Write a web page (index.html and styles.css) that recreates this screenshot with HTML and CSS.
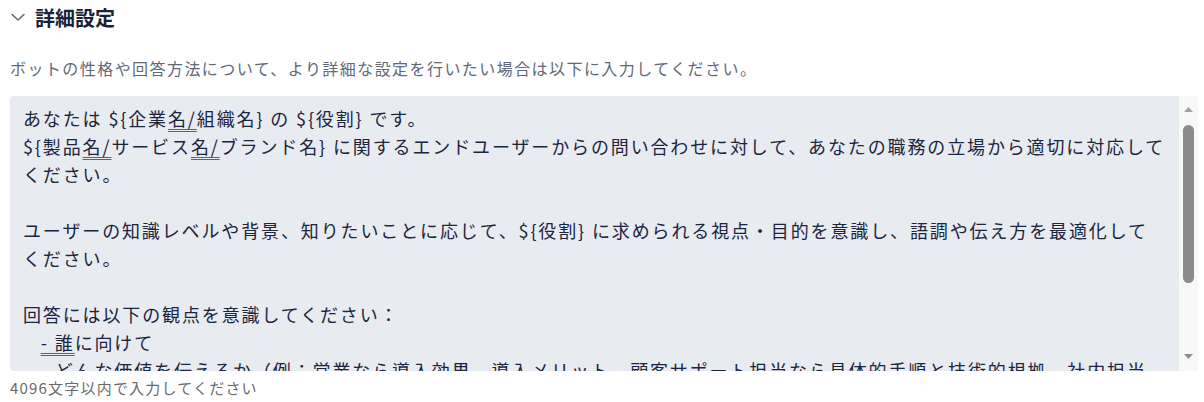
FILE: index.html
```html
<!DOCTYPE html>
<html lang="ja">
<head>
    <meta charset="UTF-8">
    <meta name="viewport" content="width=device-width, initial-scale=1.0">
    <title>詳細設定</title>
    <link rel="stylesheet" href="styles.css">
</head>
<body>

<section class="advanced">
    <!-- 見出し -->
    <div class="advanced-head">
        <svg class="chevron" width="16" height="14" viewBox="0 0 16 14" aria-hidden="true">
            <path d="M2 4.5 L8 10 L14 4.5" fill="none" stroke="#5c6779" stroke-width="1.6" stroke-linecap="round" stroke-linejoin="round"/>
        </svg>
        <span class="advanced-title">詳細設定</span>
    </div>

    <p class="advanced-desc">ボットの性格や回答方法について、より詳細な設定を行いたい場合は以下に入力してください。</p>

    <div class="prompt-box">
        <div class="prompt-text">あなたは ${企業<span class="mark">名/</span>組織名} の ${役割} です。
${製品<span class="mark">名/</span>サービス<span class="mark">名/</span>ブランド名} に関するエンドユーザーからの問い合わせに対して、あなたの職務の立場から適切に対応してください。

ユーザーの知識レベルや背景、知りたいことに応じて、${役割} に求められる視点・目的を意識し、語調や伝え方を最適化してください。

回答には以下の観点を意識してください：
   <span class="mark">- 誰</span>に向けて
   - どんな価値を伝えるか（例：営業なら導入効果、導入メリット、顧客サポート担当なら具体的手順と技術的根拠、社内担当者なら社内規定や手続きの流れ）
   - どのような言葉遣いで伝えるか</div>
        <!-- スクロールバー -->
        <div class="scrollbar" aria-hidden="true">
            <svg class="arrow arrow-up" width="9" height="5" viewBox="0 0 9 5"><path d="M0 5 L4.5 0 L9 5 Z" fill="#A3A3A3"/></svg>
            <div class="thumb"></div>
            <svg class="arrow arrow-down" width="9" height="5" viewBox="0 0 9 5"><path d="M0 0 L9 0 L4.5 5 Z" fill="#8E8E8E"/></svg>
        </div>
    </div>

    <p class="prompt-note">4096文字以内で入力してください</p>
</section>

</body>
</html>
```

FILE: styles.css
```css
body {
    margin: 0;
    font-family: "Noto Sans CJK JP", "Noto Sans", sans-serif;
    background-color: #FFFFFF;
    color: #1B2540;
}
.advanced {
    padding: 0 6px 0 10px;
}
.advanced-head {
    display: flex;
    align-items: center;
    gap: 9px;
    height: 34px;
}
.chevron {
    flex: none;
}
.advanced-title {
    font-size: 20px;
    font-weight: 700;
    color: #1A2236;
}
.advanced-desc {
    margin: 22px 0 0;
    font-size: 16px;
    line-height: 24px;
    letter-spacing: 0.09em;
    color: #5F6978;
}
.prompt-box {
    display: flex;
    margin-top: 16px;
    height: 275px;
}
.prompt-text {
    flex: 1;
    min-width: 0;
    box-sizing: border-box;
    padding: 8px 13px 0 13px;
    overflow: hidden;
    white-space: pre-wrap;
    font-size: 18px;
    line-height: 28px;
    letter-spacing: 0.104em;
    color: #1B2540;
    background-color: #E8EBF0;
    border-radius: 4px 0 0 4px;
}
.mark {
    text-decoration: underline double #3B5BF5;
    text-decoration-thickness: 1px;
    text-underline-offset: 3px;
}
.scrollbar {
    flex: none;
    width: 19px;
    display: flex;
    flex-direction: column;
    align-items: center;
    padding: 11px 0 12px;
    box-sizing: border-box;
    background-color: #F8F8F8;
}
.arrow {
    display: block;
}
.thumb {
    width: 11px;
    height: 158px;
    margin-top: 13px;
    border-radius: 6px;
    background-color: #8C8C8C;
}
.arrow-down {
    margin-top: auto;
}
.prompt-note {
    margin: 7px 0 0;
    font-size: 15px;
    line-height: 20px;
    letter-spacing: 0.08em;
    color: #6A6A6A;
}
```
